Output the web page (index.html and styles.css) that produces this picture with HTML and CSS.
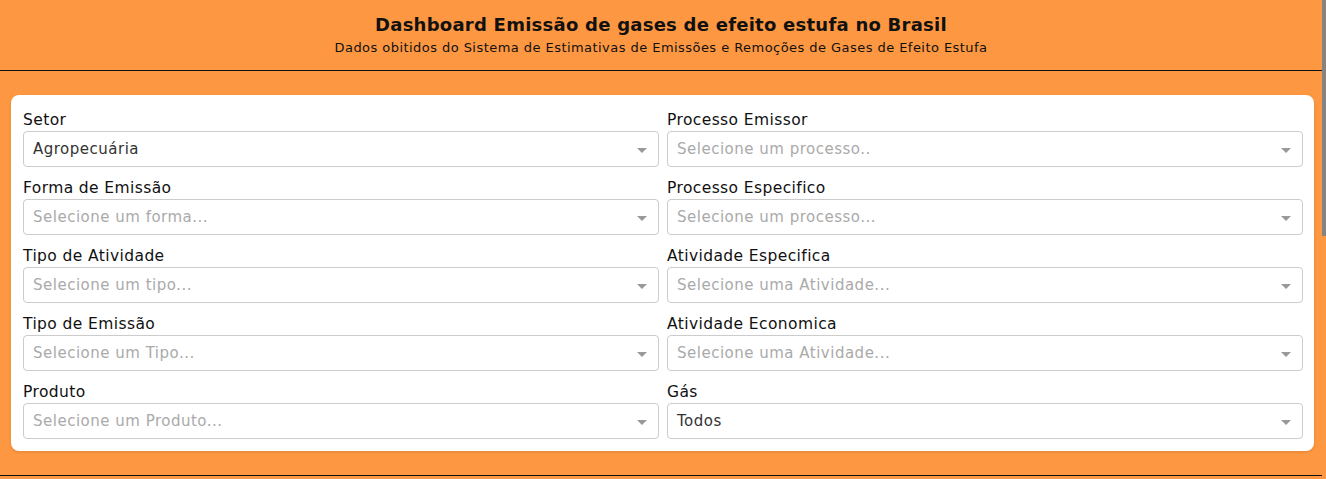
FILE: index.html
```html
<!DOCTYPE html>
<html lang="pt-BR">
<head>
<meta charset="utf-8">
<title>Dashboard Emissão de gases de efeito estufa no Brasil</title>
<link rel="stylesheet" href="styles.css">
</head>
<body>
<div class="scrollbar"></div>
<div class="page">
<header class="header">
  <h1 class="title">Dashboard Emissão de gases de efeito estufa no Brasil</h1>
  <p class="subtitle">Dados obitidos do Sistema de Estimativas de Emissões e Remoções de Gases de Efeito Estufa</p>
</header>
<main class="main">
  <section class="card">
    <div class="grid">
      <div class="field"><label class="label">Setor</label><div class="select"><span class="value">Agropecuária</span><span class="arrow"></span></div></div>
      <div class="field"><label class="label">Processo Emissor</label><div class="select"><span class="placeholder">Selecione um processo..</span><span class="arrow"></span></div></div>
      <div class="field"><label class="label">Forma de Emissão</label><div class="select"><span class="placeholder">Selecione um forma...</span><span class="arrow"></span></div></div>
      <div class="field"><label class="label">Processo Especifico</label><div class="select"><span class="placeholder">Selecione um processo...</span><span class="arrow"></span></div></div>
      <div class="field"><label class="label">Tipo de Atividade</label><div class="select"><span class="placeholder">Selecione um tipo...</span><span class="arrow"></span></div></div>
      <div class="field"><label class="label">Atividade Especifica</label><div class="select"><span class="placeholder">Selecione uma Atividade...</span><span class="arrow"></span></div></div>
      <div class="field"><label class="label">Tipo de Emissão</label><div class="select"><span class="placeholder">Selecione um Tipo...</span><span class="arrow"></span></div></div>
      <div class="field"><label class="label">Atividade Economica</label><div class="select"><span class="placeholder">Selecione uma Atividade...</span><span class="arrow"></span></div></div>
      <div class="field"><label class="label">Produto</label><div class="select"><span class="placeholder">Selecione um Produto...</span><span class="arrow"></span></div></div>
      <div class="field"><label class="label">Gás</label><div class="select"><span class="value">Todos</span><span class="arrow"></span></div></div>
    </div>
  </section>
</main>
<section class="charts"></section>
</div>
</body>
</html>
```
FILE: styles.css
```css
html {
  background: #fd9741;
}
body {
  margin: 0;
  background: #fd9741;
  font-family: "DejaVu Sans", "Open Sans", sans-serif;
  color: #111;
}
.scrollbar {
  position: fixed;
  top: 0;
  right: 0;
  width: 4px;
  height: 236px;
  background: #848484;
  z-index: 10;
}
.page {
  margin-right: 4px;
}
.header {
  height: 70px;
  border-bottom: 1px solid #111;
  display: flex;
  flex-direction: column;
  align-items: center;
}
.title {
  margin: 12px 0 0;
  font-size: 18px;
  font-weight: 700;
  line-height: 26px;
  letter-spacing: 0.25px;
}
.subtitle {
  margin: 0;
  font-size: 13px;
  line-height: 20px;
  letter-spacing: 0.45px;
}
.main {
  padding: 24px 8px 24px 11px;
}
.card {
  background: #fff;
  border-radius: 8px;
  padding: 12px 11px 12px 12px;
  box-shadow: 0 1px 3px rgba(0, 0, 0, 0.12);
}
.grid {
  display: grid;
  grid-template-columns: 1fr 1fr;
  gap: 8px;
}
.field {
  display: flex;
  flex-direction: column;
}
.label {
  font-size: 15.5px;
  line-height: 24px;
  height: 24px;
  padding-top: 1px;
  box-sizing: border-box;
  letter-spacing: 0.4px;
}
.select {
  height: 36px;
  box-sizing: border-box;
  border: 1px solid #ccc;
  border-radius: 4px;
  display: flex;
  align-items: center;
  justify-content: space-between;
  padding: 0 11px 0 9px;
  font-size: 15px;
  letter-spacing: 0.5px;
}
.value {
  color: #333;
}
.placeholder {
  color: #aaa;
}
.arrow {
  width: 0;
  height: 0;
  border-left: 5px solid transparent;
  border-right: 5px solid transparent;
  border-top: 5px solid #999;
  margin-top: 3px;
}
.charts {
  border-top: 1px solid #111;
  height: 480px;
}
```
